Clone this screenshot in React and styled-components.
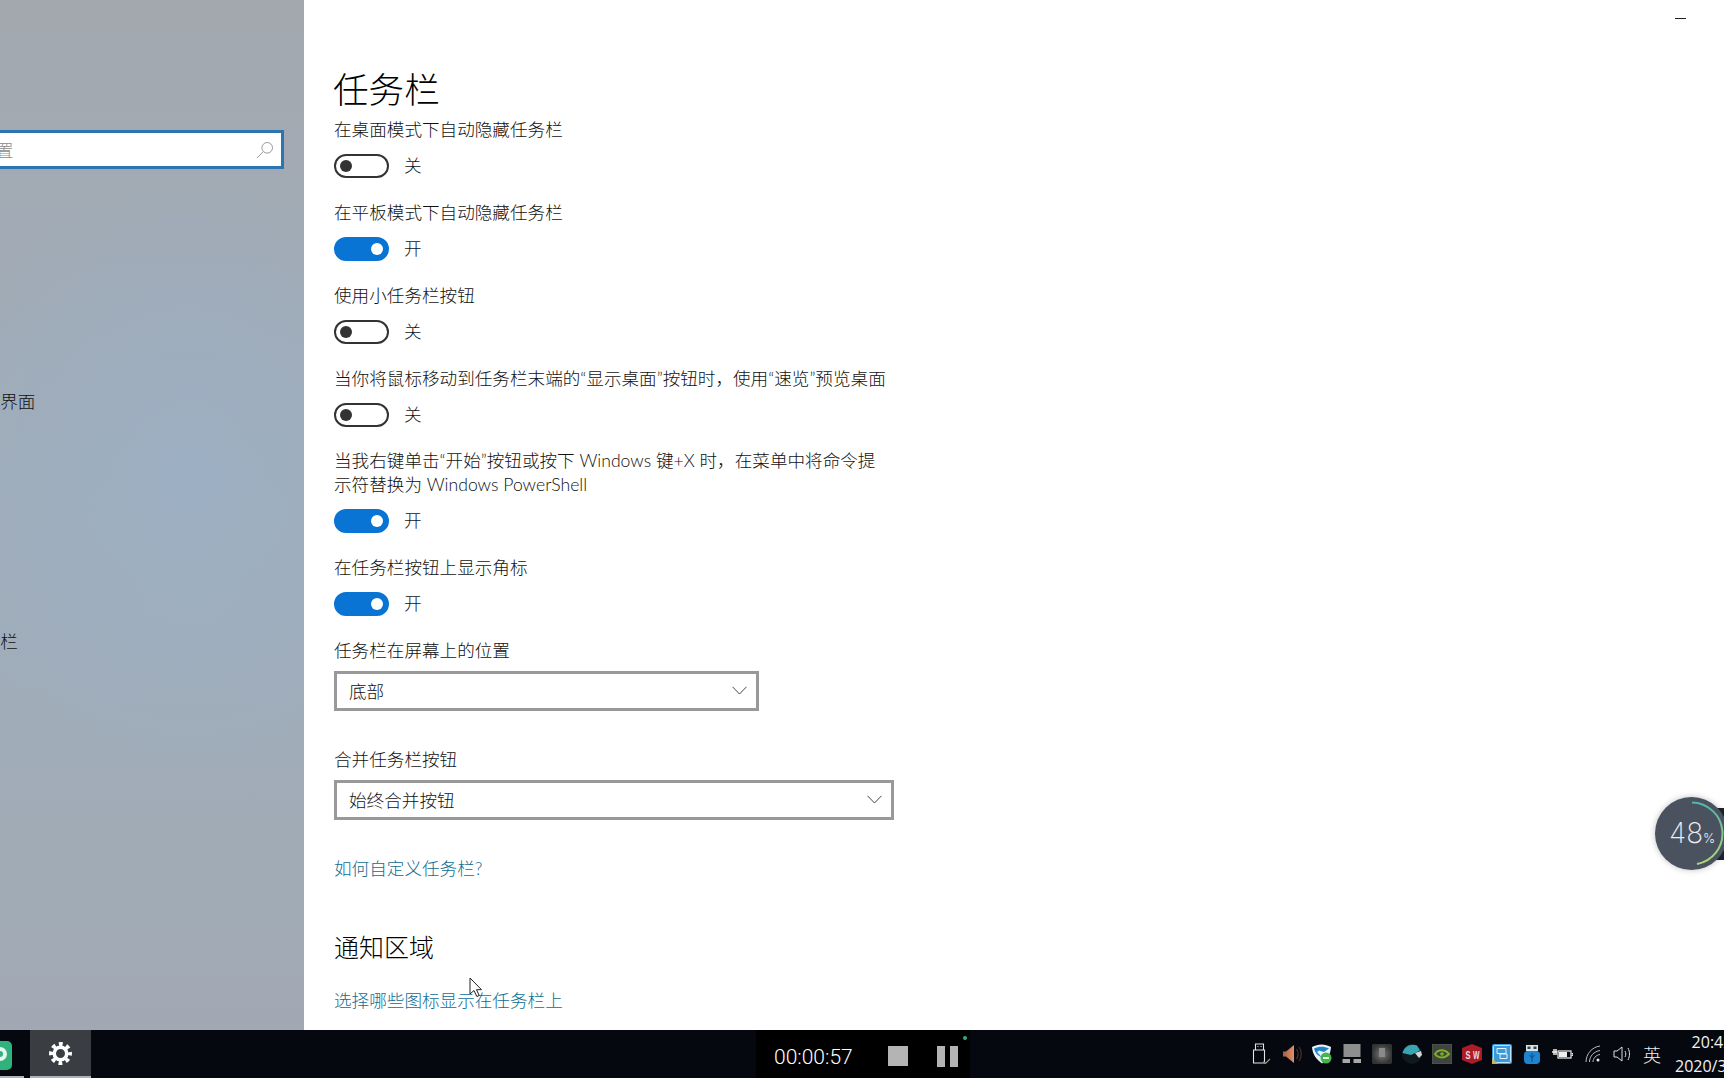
import React from 'react';
import styled, { createGlobalStyle } from 'styled-components';

const Global = createGlobalStyle`
  html, body {
    margin: 0;
    height: 100%;
    overflow: hidden;
    background: #fff;
  }
  body {
    font-family: "Lato", "Noto Sans CJK SC", sans-serif;
    color: #111;
  }
`;

const Screen = styled.div`
  position: relative;
  width: 1724px;
  height: 1078px;
  overflow: hidden;
  display: grid;
  grid-template-rows: 1030px 48px;
`;

const Desktop = styled.div`
  display: flex;
  min-height: 0;
`;

const Sidebar = styled.aside`
  width: 304px;
  flex: none;
  padding-top: 130px;
  box-sizing: border-box;
  background:
    radial-gradient(ellipse 260px 300px at 62% 46%, rgba(155, 176, 198, 0.75), transparent),
    linear-gradient(180deg, #a3a8af 0%, #a1abb6 30%, #a0adba 60%, #a0abb6 85%, #a2a8b3 100%);
  overflow: hidden;
`;

const SearchBox = styled.div`
  width: 344px;
  height: 39px;
  margin-left: -60px;
  box-sizing: border-box;
  border: 3px solid #2b76b1;
  background: #fff;
  display: flex;
  align-items: center;
  justify-content: space-between;
  padding-right: 7px;
  font-size: 17.6px;
  font-weight: 300;
  color: #8c8c8c;
`;

const Nav = styled.nav`
  margin: 201px 0 0 -35px;
`;

const NavItem = styled.div`
  height: 60px;
  display: flex;
  align-items: center;
  font-size: 17.6px;
  color: #111;
  font-weight: 300;
  white-space: nowrap;
`;

const Main = styled.main`
  position: relative;
  flex: 1;
  padding: 68px 0 0 30px;
  background: #fff;
  overflow: hidden;
`;

const Minimize = styled.div`
  position: absolute;
  top: 18px;
  right: 38px;
  width: 11px;
  height: 1px;
  background: #222;
`;

const Title = styled.h1`
  margin: 0 0 6px -1px;
  font-size: 35.6px;
  line-height: 44px;
  font-weight: 300;
  color: #000;
`;

const Label = styled.div`
  width: 552px;
  font-size: 17.6px;
  line-height: 24px;
  font-weight: 300;
  white-space: ${p => (p.$wrap ? 'normal' : 'nowrap')};
`;

const Setting = styled.section`
  margin-bottom: ${p => (p.$tight ? 22 : 23)}px;
`;

const ToggleRow = styled.div`
  display: flex;
  align-items: center;
  gap: 15px;
  margin-top: 12px;
  font-size: 17.6px;
  line-height: 24px;
  font-weight: 300;
`;

const Track = styled.div`
  width: 55px;
  height: 24px;
  box-sizing: border-box;
  border-radius: 12px;
  border: 2.5px solid ${p => (p.$on ? '#0a74d4' : '#333')};
  background: ${p => (p.$on ? '#0a74d4' : '#fff')};
  display: flex;
  align-items: center;
  justify-content: ${p => (p.$on ? 'flex-end' : 'flex-start')};
  padding: 0 4px;
`;

const Knob = styled.div`
  width: 12px;
  height: 12px;
  border-radius: 50%;
  background: ${p => (p.$on ? '#fff' : '#333')};
`;

const Select = styled.div`
  width: ${p => p.$width}px;
  height: 40px;
  box-sizing: border-box;
  margin-top: 8px;
  border: 3px solid #999;
  display: flex;
  align-items: center;
  justify-content: space-between;
  padding: 0 9px 2px 12px;
  font-size: 17.6px;
  font-weight: 300;
`;

const SelectBlock = styled.section`
  margin-bottom: 37px;
`;

const HelpLink = styled.a`
  display: block;
  font-size: 17.6px;
  line-height: 24px;
  font-weight: 300;
  color: #0f6d92;
`;

const Heading = styled.h2`
  margin: 48px 0 24px;
  font-size: 25px;
  line-height: 36px;
  font-weight: 300;
  color: #000;
`;

const Cursor = styled.svg`
  position: absolute;
  left: 469px;
  top: 977px;
`;

const Taskbar = styled.footer`
  display: flex;
  background: #05090f;
  color: #fff;
  overflow: hidden;
`;

const AppIcon = styled.div`
  position: relative;
  width: 30px;
  flex: none;
  &::before {
    content: '';
    position: absolute;
    left: -14px;
    top: 11px;
    width: 26px;
    height: 29px;
    border-radius: 5px;
    background: #2fb27c;
  }
  &::after {
    content: '';
    position: absolute;
    left: -7px;
    top: 17px;
    width: 6px;
    height: 6px;
    border-radius: 50%;
    border: 4px solid #e8f6ef;
  }
`;

const AppUnderline = styled.div`
  position: absolute;
  left: 0;
  bottom: 0;
  width: 24px;
  height: 2px;
  background: #a9b4c0;
`;

const SettingsButton = styled.div`
  width: 61px;
  flex: none;
  box-sizing: border-box;
  display: flex;
  align-items: center;
  justify-content: center;
  background: #3a3e42;
  border-bottom: 2px solid #a9b4c0;
`;

const Recorder = styled.div`
  position: relative;
  width: 214px;
  margin-left: 665px;
  flex: none;
  background: #000;
  display: flex;
  align-items: center;
  padding: 4px 0 0 18px;
  box-sizing: border-box;
`;

const Timer = styled.div`
  width: 114px;
  padding-top: 1px;
  font-family: "Roboto", sans-serif;
  font-weight: 300;
  font-size: 21px;
`;

const StopMark = styled.div`
  width: 20px;
  height: 20px;
  background: #b4b4b4;
`;

const PauseMark = styled.div`
  display: flex;
  gap: 5px;
  margin-left: 29px;
`;

const PauseBar = styled.div`
  width: 8px;
  height: 21px;
  background: #b4b4b4;
`;

const RecDot = styled.div`
  position: absolute;
  left: 207px;
  top: 6px;
  width: 4px;
  height: 4px;
  border-radius: 50%;
  background: #2fae80;
`;

const Tray = styled.div`
  display: flex;
  align-items: center;
  gap: 10px;
  margin-left: 282px;
  flex: none;
`;

const Ime = styled.div`
  font-size: 18px;
  font-weight: 300;
  margin-right: 4px;
  color: #eee;
`;

const Clock = styled.div`
  flex: none;
  width: 74px;
  text-align: center;
  font-size: 16px;
  line-height: 24px;
  color: #f2f2f2;
  white-space: nowrap;
  font-family: "Open Sans", sans-serif;
`;

const Gauge = styled.div`
  position: absolute;
  left: 1655px;
  top: 797px;
  width: 73px;
  height: 73px;
  border-radius: 50%;
  background: #4a5260;
  box-shadow: 0 0 6px rgba(0, 0, 0, 0.25);
  display: flex;
  align-items: baseline;
  padding-left: 14px;
  box-sizing: border-box;
  color: #eceef1;
  font-family: "Inter", sans-serif;
  font-weight: 200;
  line-height: 73px;
`;

const GaugeStrip = styled.div`
  position: absolute;
  left: 1716px;
  top: 808px;
  width: 8px;
  height: 52px;
  background: #1d2430;
`;

const GaugeValue = styled.span`
  font-size: 28px;
`;

const GaugeUnit = styled.span`
  font-size: 13px;
  font-weight: 300;
`;

const GaugeArc = styled.svg`
  position: absolute;
  inset: 0;
`;

const toggles = [
  { label: '在桌面模式下自动隐藏任务栏', on: false },
  { label: '在平板模式下自动隐藏任务栏', on: true },
  { label: '使用小任务栏按钮', on: false },
  { label: '当你将鼠标移动到任务栏末端的“显示桌面”按钮时，使用“速览”预览桌面', on: false, tight: true },
  { label: '当我右键单击“开始”按钮或按下 Windows 键+X 时，在菜单中将命令提示符替换为 Windows PowerShell', on: true, wrap: true },
  { label: '在任务栏按钮上显示角标', on: true },
];

const Chevron = () => (
  <svg width="15" height="9" viewBox="0 0 15 9" fill="none" stroke="#444" strokeWidth="1">
    <path d="M.5.8 7.5 8 14.5.8" />
  </svg>
);

const SearchGlyph = () => (
  <svg width="18" height="18" viewBox="0 0 18 18" fill="none" stroke="#999" strokeWidth="1">
    <circle cx="11.2" cy="6.8" r="5.3" />
    <path d="M7.4 10.6 1.2 16.8" />
  </svg>
);

const Gear = () => (
  <svg width="25" height="25" viewBox="0 0 24 24" fill="none" stroke="#fff">
    <circle cx="12" cy="12" r="6" strokeWidth="3.4" />
    <circle cx="12" cy="12" r="9" strokeWidth="4" strokeDasharray="3.6 3.47" strokeDashoffset="1.8" />
  </svg>
);

const UsbIcon = () => (
  <svg width="20" height="22" viewBox="0 0 20 22" fill="none" stroke="#e4e4e4" strokeWidth="1.1">
    <path d="M3.5 1h8v6h-8zM1.500 7h11v13h-11z" />
    <path d="M5.500 3.500h1M8.500 3.500h1" />
    <path d="m11.500 18.500 2 2L18 16" stroke="#999" />
  </svg>
);

const MuteSpeaker = () => (
  <svg width="20" height="20" viewBox="0 0 20 20">
    <defs>
      <linearGradient id="cone" x1="0" y1="0" x2="1" y2="0">
        <stop offset="0" stopColor="#a85f44" />
        <stop offset="1" stopColor="#e0906a" />
      </linearGradient>
    </defs>
    <path d="M1 7.500h3L12 1v18l-8-6.500H1z" fill="url(#cone)" />
    <path d="M14.500 5c2 3 2 7 0 10M17 3c3 4 3 10 0 14" fill="none" stroke="#4a3228" strokeWidth="1.200" />
  </svg>
);

const Shield = () => (
  <svg width="20" height="20" viewBox="0 0 20 20">
    <path d="M0 3c6-3.500 13-3.500 19 0-.5 8-4 13-9 16.500C5 16 .5 11 0 3z" fill="#e8f2f8" />
    <path d="M2 4.500c5-2.500 10-2.500 15 0L12 8 7 6.500 5 8l5 5.500C6 12 3 9 2 4.500z" fill="#1f82c6" />
    <circle cx="14" cy="14" r="5.500" fill="#43b649" />
    <path d="M11 14h6" stroke="#fff" strokeWidth="1.800" />
  </svg>
);

const GrayMonitor = () => (
  <svg width="20" height="20" viewBox="0 0 20 20">
    <rect x="1.500" y="0" width="17" height="13" fill="#8e8e8e" />
    <rect x="0.500" y="15" width="7.500" height="4" fill="#a8a8a8" />
    <rect x="11.500" y="15" width="7.500" height="4" fill="#a8a8a8" />
  </svg>
);

const DimSquare = () => (
  <svg width="20" height="20" viewBox="0 0 20 20">
    <defs>
      <radialGradient id="dim">
        <stop offset="0" stopColor="#7a7a7a" />
        <stop offset="1" stopColor="#343434" />
      </radialGradient>
    </defs>
    <rect width="20" height="20" rx="2" fill="url(#dim)" />
    <rect x="7" y="4" width="6" height="9" fill="#8a8a8a" />
  </svg>
);

const TealGlobe = () => (
  <svg width="20" height="20" viewBox="0 0 20 20">
    <circle cx="10" cy="10" r="10" fill="#10191e" />
    <path d="M.5 9C2 3 8-1 15 1.500l3 5L9 11z" fill="#3aa5b2" />
    <path d="m13 9 6-2 1 4-3 3z" fill="#cfd6d8" />
  </svg>
);

const Nvidia = () => (
  <svg width="20" height="20" viewBox="0 0 20 20">
    <rect width="20" height="20" fill="#3f443c" stroke="#5a5a5a" />
    <path d="M3 10c3-5 10-5 14 0-4 4.500-11 4.500-14 0z" fill="none" stroke="#7fae2a" strokeWidth="2" />
    <circle cx="10" cy="10" r="1.800" fill="#7fae2a" />
  </svg>
);

const SolidWorks = () => (
  <svg width="20" height="20" viewBox="0 0 20 20">
    <path d="M10 0 20 4v12l-10 4L0 16V4z" fill="#a91c28" />
    <text x="3.500" y="14.500" fontSize="10" fontWeight="700" fill="#f4dede" fontFamily="Liberation Sans" textLength="5" lengthAdjust="spacingAndGlyphs">S</text>
    <text x="11" y="14.500" fontSize="10" fontWeight="700" fill="#f4dede" fontFamily="Liberation Sans" textLength="6.500" lengthAdjust="spacingAndGlyphs">W</text>
  </svg>
);

const BlueTool = () => (
  <svg width="20" height="20" viewBox="0 0 20 20">
    <rect width="20" height="20" rx="2" fill="#3a9ada" />
    <rect x="1.500" y="1.500" width="17" height="17" rx="1" fill="none" stroke="#bfe2f6" />
    <path d="M5 4.500h9v5H5zM8 10h7v4.500H8z" fill="none" stroke="#e3f3fb" strokeWidth="1" />
    <path d="M0 14l6 6H0z" fill="#c8b45c" />
  </svg>
);

const BlueUsb = () => (
  <svg width="20" height="20" viewBox="-1 0 20 20">
    <rect x="1" y="7" width="16" height="13" rx="4" fill="#1f84cf" />
    <rect x="3" y="1" width="12" height="6" fill="#d8e4ec" />
    <rect x="4.500" y="2.500" width="3" height="2.500" fill="#30414d" />
    <rect x="10.500" y="2.500" width="3" height="2.500" fill="#30414d" />
    <path d="M9 9v9M6.500 11l2.500 3 2.500-3" stroke="#0d4f80" strokeWidth="1" fill="none" />
  </svg>
);

const BatteryPlug = () => (
  <svg width="21" height="20" viewBox="0 0 21 20" fill="none" stroke="#eee" strokeWidth="1.200">
    <rect x="6" y="7" width="13" height="7" />
    <rect x="7" y="8" width="8" height="5" fill="#eee" stroke="none" />
    <path d="M19.500 9.500h1.500v2h-1.500" />
    <path d="M0 8h5M2 5v6M4 5v6" strokeWidth="1.500" />
  </svg>
);

const WifiIcon = () => (
  <svg width="20" height="20" viewBox="-2 0 20 20" fill="none" stroke="#bbb" strokeWidth="1">
    <path d="M1 18C1 10 7 3 15 2M4.500 18c0-6 4.500-10.500 10.500-11.500M8 18c0-3.500 3-7 7-7.500" />
    <circle cx="13" cy="16" r="1.500" fill="#eee" stroke="none" />
  </svg>
);

const VolumeIcon = () => (
  <svg width="20" height="20" viewBox="0 0 20 20" fill="none" stroke="#ddd" strokeWidth="1">
    <path d="M1 7h3l5-4v14l-5-4H1z" />
    <path d="M12 7c1 2 1 4 0 6M15 4c2 4 2 8 0 12" />
  </svg>
);

const trayIcons = [UsbIcon, MuteSpeaker, Shield, GrayMonitor, DimSquare, TealGlobe, Nvidia, SolidWorks, BlueTool, BlueUsb, BatteryPlug, WifiIcon, VolumeIcon];

export default function App() {
  return (
    <Screen>
      <Global />
      <Desktop>
        <Sidebar>
          <SearchBox>
            <span>查找设置</span>
            <SearchGlyph />
          </SearchBox>
          <Nav>
            {['锁屏界面', '主题', '字体', '开始', '任务栏'].map(item => (
              <NavItem key={item}>{item}</NavItem>
            ))}
          </Nav>
        </Sidebar>
        <Main>
          <Minimize />
          <Title>任务栏</Title>
          {toggles.map(t => (
            <Setting key={t.label} $tight={t.tight}>
              <Label $wrap={t.wrap}>{t.label}</Label>
              <ToggleRow>
                <Track $on={t.on}><Knob $on={t.on} /></Track>
                {t.on ? '开' : '关'}
              </ToggleRow>
            </Setting>
          ))}
          <SelectBlock>
            <Label>任务栏在屏幕上的位置</Label>
            <Select $width={425}>底部<Chevron /></Select>
          </SelectBlock>
          <SelectBlock>
            <Label>合并任务栏按钮</Label>
            <Select $width={560}>始终合并按钮<Chevron /></Select>
          </SelectBlock>
          <HelpLink>如何自定义任务栏?</HelpLink>
          <Heading>通知区域</Heading>
          <HelpLink>选择哪些图标显示在任务栏上</HelpLink>
        </Main>
      </Desktop>
      <Taskbar>
        <AppIcon><AppUnderline /></AppIcon>
        <SettingsButton><Gear /></SettingsButton>
        <Recorder>
          <Timer>00:00:57</Timer>
          <StopMark />
          <PauseMark><PauseBar /><PauseBar /></PauseMark>
          <RecDot />
        </Recorder>
        <Tray>
          {trayIcons.map((Icon, i) => <Icon key={i} />)}
          <Ime>英</Ime>
          <Clock>20:42<br />2020/3/25</Clock>
        </Tray>
      </Taskbar>
      <GaugeStrip />
      <Gauge>
        <GaugeValue>48</GaugeValue>
        <GaugeUnit>%</GaugeUnit>
        <GaugeArc width="73" height="73" viewBox="0 0 73 73" fill="none" strokeWidth="2">
          <defs>
            <linearGradient id="gaugeGrad" gradientUnits="userSpaceOnUse" x1="36" y1="5" x2="36" y2="68">
              <stop offset="0" stopColor="#4db8aa" />
              <stop offset="1" stopColor="#b2d673" />
            </linearGradient>
          </defs>
          <path d="M37 5.500A31 31 0 0 1 42 67" stroke="url(#gaugeGrad)" />
        </GaugeArc>
      </Gauge>
      <Cursor width="13" height="21" viewBox="0 0 13 21">
        <path d="M1 1v16l4-3.500 2.800 6 2.400-1-2.700-5.800H12.500z" fill="#fff" stroke="#222" strokeWidth="1" />
      </Cursor>
    </Screen>
  );
}
